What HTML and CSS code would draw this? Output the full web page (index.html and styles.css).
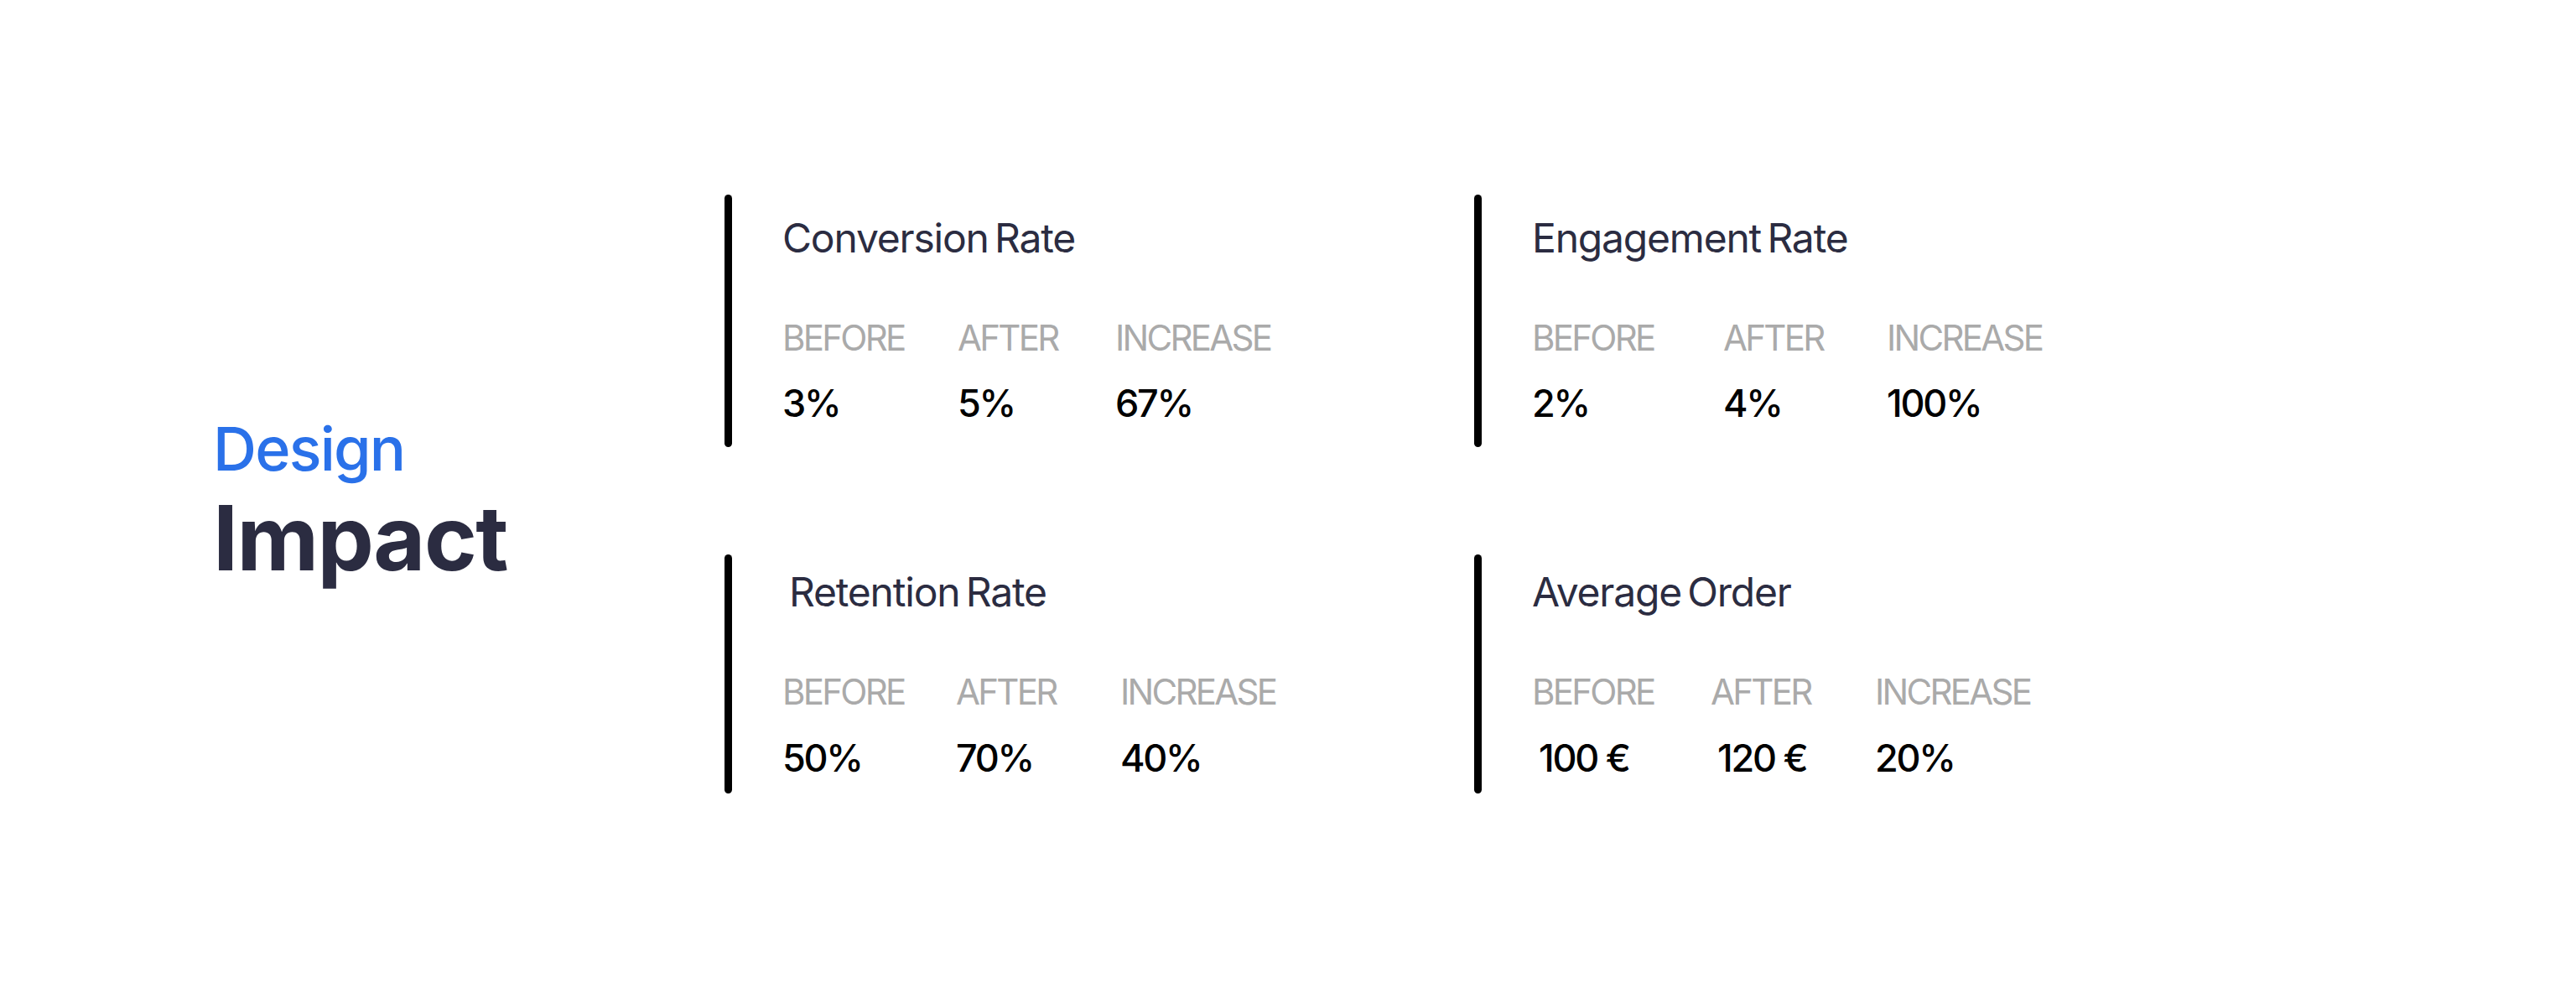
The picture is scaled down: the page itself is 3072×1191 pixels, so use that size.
FILE: index.html
```html
<!DOCTYPE html>
<html lang="en">
<head>
<meta charset="utf-8">
<title>Design Impact</title>
<link rel="stylesheet" href="styles.css">
</head>
<body>
<main class="page">
  <header class="heading">
    <p class="eyebrow">Design</p>
    <h1 class="headline">Impact</h1>
  </header>
  <section class="metrics">
    <article class="card card--top card--conversion">
      <div class="bar"></div>
      <div class="card-body">
        <h2 class="card-title">Conversion Rate</h2>
        <div class="stats">
          <span class="label">BEFORE</span>
          <span class="label">AFTER</span>
          <span class="label">INCREASE</span>
          <span class="value">3%</span>
          <span class="value">5%</span>
          <span class="value">67%</span>
        </div>
      </div>
    </article>
    <article class="card card--top card--engagement">
      <div class="bar"></div>
      <div class="card-body">
        <h2 class="card-title">Engagement Rate</h2>
        <div class="stats">
          <span class="label">BEFORE</span>
          <span class="label">AFTER</span>
          <span class="label">INCREASE</span>
          <span class="value">2%</span>
          <span class="value">4%</span>
          <span class="value">100%</span>
        </div>
      </div>
    </article>
    <article class="card card--bottom card--retention">
      <div class="bar"></div>
      <div class="card-body">
        <h2 class="card-title card-title--indent">Retention Rate</h2>
        <div class="stats">
          <span class="label">BEFORE</span>
          <span class="label">AFTER</span>
          <span class="label">INCREASE</span>
          <span class="value">50%</span>
          <span class="value">70%</span>
          <span class="value">40%</span>
        </div>
      </div>
    </article>
    <article class="card card--bottom card--order">
      <div class="bar"></div>
      <div class="card-body">
        <h2 class="card-title">Average Order</h2>
        <div class="stats">
          <span class="label">BEFORE</span>
          <span class="label">AFTER</span>
          <span class="label">INCREASE</span>
          <span class="value value--indent">100 €</span>
          <span class="value value--indent">120 €</span>
          <span class="value">20%</span>
        </div>
      </div>
    </article>
  </section>
</main>
</body>
</html>
```

FILE: styles.css
```css
* {
  box-sizing: border-box;
}

html, body {
  margin: 0;
  padding: 0;
  background: #ffffff;
}

body {
  font-family: Inter, "Noto Sans", "Liberation Sans", sans-serif;
  width: 3072px;
  height: 1191px;
  overflow: hidden;
}

.page {
  display: flex;
  align-items: flex-start;
  padding: 232px 0 0 254px;
}

.heading {
  width: 610px;
  flex: none;
  margin-top: 267px;
}

.eyebrow {
  margin: 0;
  font-size: 72px;
  line-height: 1;
  font-weight: 500;
  color: #2a71e9;
  letter-spacing: -0.025em;
}

.headline {
  margin: 17px 0 0;
  font-size: 107px;
  line-height: 1;
  font-weight: 700;
  color: #2b2c41;
  letter-spacing: -0.015em;
}

.metrics {
  display: grid;
  grid-template-columns: 894px auto;
  row-gap: 128px;
}

.card {
  display: flex;
  align-items: stretch;
}

.bar {
  width: 9px;
  flex: none;
  background: #000000;
  border-radius: 5px;
}

.card-body {
  padding-left: 60px;
}

.card--top .card-body {
  padding-top: 28px;
  padding-bottom: 30px;
}

.card--bottom .card-body {
  padding-top: 21px;
  padding-bottom: 20px;
}

.card-title {
  margin: 0;
  font-size: 48px;
  line-height: 1;
  font-weight: 400;
  color: #2b2c41;
  letter-spacing: -0.025em;
  word-spacing: -5px;
}

.card-title--indent {
  padding-left: 8px;
}

.stats {
  display: grid;
  margin-top: 74px;
  row-gap: 34px;
}

.card--conversion .stats {
  grid-template-columns: 209px 188px auto;
}

.card--engagement .stats {
  grid-template-columns: 228px 195px auto;
}

.card--retention .stats {
  grid-template-columns: 207px 196px auto;
  row-gap: 35px;
}

.card--order .stats {
  grid-template-columns: 213px 196px auto;
  row-gap: 35px;
}

.label {
  font-size: 42px;
  line-height: 1;
  font-weight: 400;
  color: #aaaaaa;
  letter-spacing: -0.065em;
  white-space: nowrap;
}

.value {
  font-size: 45px;
  line-height: 1;
  font-weight: 500;
  color: #000000;
  letter-spacing: -0.05em;
  white-space: nowrap;
}

.value--indent {
  padding-left: 8px;
}
```
